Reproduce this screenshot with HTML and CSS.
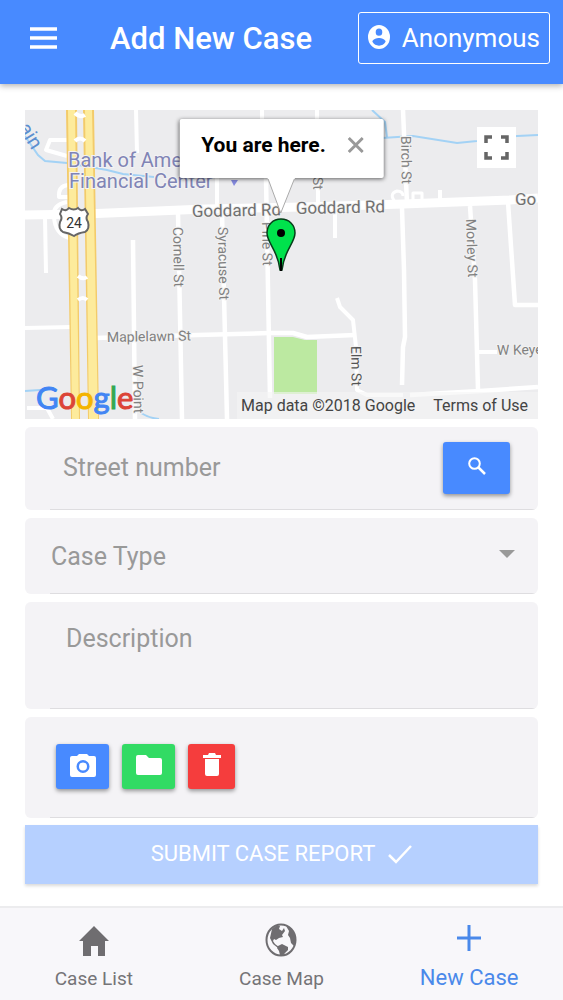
FILE: index.html
```html
<!DOCTYPE html>
<html lang="en">
<head>
  <meta charset="UTF-8">
  <meta name="viewport" content="width=device-width, initial-scale=1.0">
  <title>Add New Case</title>
  <link rel="stylesheet" href="styles.css">
</head>
<body>

  <header class="toolbar">
    <button class="menu-btn" type="button" aria-label="Menu">
      <svg width="28" height="22" viewBox="0 0 28 22"><path d="M0 2h27M0 11h27M0 20h27" stroke="#fff" stroke-width="3.500"/></svg>
    </button>
    <h1>Add New Case</h1>
    <button class="user-btn" type="button">
      <svg width="22" height="24" viewBox="2 2 20 20" preserveAspectRatio="none"><path fill="#fff" d="M12 2a10 10 0 1 0 0 20 10 10 0 0 0 0-20zm0 3a3 3 0 1 1 0 6 3 3 0 0 1 0-6zm0 14.200a7.200 7.200 0 0 1-6-3.200c0-2 4-3.100 6-3.100s6 1.100 6 3.100a7.200 7.200 0 0 1-6 3.200z"/></svg>
      <span>Anonymous</span>
    </button>
  </header>

  <main class="content">
    <section class="map" aria-label="Map">
      <svg class="map-tiles" viewBox="0 0 513 309" preserveAspectRatio="xMidYMid slice">
        <rect width="513" height="309" fill="#ececee"/>
        <path fill="#bce9a1" d="M249 227h19l12 3h12v54h-43z"/>

        <!-- water -->
        <g fill="none" stroke="#a3d2f5" stroke-width="2">
          <path d="M0 26l13 19 7 6 22 2 40 7 16 4 31 3"/>
          <path d="M347 0l13 12 2 15M357 28l31-2 44 7 20-2 40-5 21-1"/>
          <path d="M0 281l30-2M116 303q8 5 18 6"/>
        </g>

        <!-- streets -->
        <g fill="none" stroke="#fff" stroke-width="4" stroke-linejoin="round">
          <path d="M111 0l1 43M237 0v18M192 68v34M292 0v18M293 67v34M310 101v27"/>
          <path d="M0 218l47-1M20 107l1 56M2 298h20l6 11"/>
          <path d="M43 30H25l-4 10 21 6M43 75q-10 1-9 12h10M42 92q-15 3-13 15 1 17 15 21"/>
          <path d="M312 188l3 9 13 13 3 27 1 43 10 5h36"/>
          <path d="M453 242h19M415 80v14"/>
          <path d="M388 93V83h9v10M371 93q-8-9 1-12 6 0 6 5" stroke-width="3"/>
        </g>
        <g fill="none" stroke="#fff" stroke-width="4.500" stroke-linejoin="round">
          <path d="M108 130l2 179M153 103l4 206M197 102l5 207M241 68l4 220"/>
          <path d="M70 228l102-3 73-2h23l14 4 48-2"/>
          <path d="M378 0l4 94M377 98l2 62 1 67-2 10-1 38"/>
          <path d="M445 96l5 74 3 110M483 92l7 103h23M385 285l70-4 58-4"/>
        </g>
        <path d="M0 105l60-1 120-5 98-2 100-3 107-4 28-2" fill="none" stroke="#fff" stroke-width="9"/>

        <!-- highway -->
        <g>
          <path fill="#f3cb6a" d="M41 0h11l3 309h-9zM58 0h11l5 309H63z"/>
          <path fill="#fdeb9c" d="M43 0h7l4 309h-7zM60 0h7l6 309h-9z"/>
          <path d="M50 3q5 5 10 2M50 31q5-5 10 0M53 166q5 4 9 1M53 190q5-4 9 0" fill="none" stroke="#fff" stroke-width="4"/>
        </g>

        <!-- place and street names -->
        <g class="place">
          <text x="43" y="57">Bank of America</text>
          <text x="44" y="78">Financial Center</text>
          <path fill="#8489dd" d="M206 70h7l-4 6z"/>
        </g>
        <g class="road road-main">
          <text x="167" y="107" transform="rotate(-1 167 107)">Goddard Rd</text>
          <text x="271" y="104" transform="rotate(-1 271 104)">Goddard Rd</text>
          <text x="490" y="95">Go</text>
        </g>
        <g class="road">
          <text x="82" y="232" transform="rotate(-1 82 232)">Maplelawn St</text>
          <text x="472" y="245" transform="rotate(-1 472 245)">W Keyes</text>
          <text transform="translate(148 117) rotate(89)">Cornell St</text>
          <text transform="translate(193 117) rotate(89)">Syracuse St</text>
          <text transform="translate(237 112) rotate(89)">Pine St</text>
          <text transform="translate(288 67) rotate(89)">St</text>
          <text transform="translate(376 26) rotate(89)">Birch St</text>
          <text transform="translate(441 109) rotate(88)">Morley St</text>
          <text class="dark" transform="translate(326 236) rotate(89)">Elm St</text>
          <text transform="translate(108 255) rotate(89)">W Point</text>
        </g>
        <text class="river" transform="translate(-7 18) rotate(58)">ain</text>

        <!-- US 24 shield -->
        <g>
          <path fill="#fff" stroke="#666" stroke-width="2" d="M37 99q4 3 7-1 5 3 9 0 3 4 7 1l3 5q-3 4 0 8 2 7-3 10-7 1-11 4-5-3-11-4-5-3-3-10 3-4 0-8z"/>
          <text class="shield" x="49" y="118">24</text>
        </g>
      </svg>

      <svg class="pin" viewBox="0 0 30 54"><path d="M15 1C7 1 1 7 1 15c0 10 11 17 13 37h2c2-20 13-27 13-37C29 7 23 1 15 1z" fill="#00e24c" stroke="#063d19" stroke-width="1.500"/><path d="M15 40v13" stroke="#000" stroke-width="2"/><circle cx="15" cy="15" r="4" fill="#000"/></svg>

      <div class="info-window">
        <strong>You are here.</strong>
        <button type="button" aria-label="Close">
          <svg width="16" height="18" viewBox="0 0 16 18"><path d="M1 2l14 14M15 2L1 16" stroke="#999" stroke-width="3"/></svg>
        </button>
        <svg class="tail" width="30" height="38" viewBox="0 0 30 38"><path d="M1 1l13 35L28 1" fill="#fff" stroke="#aaa"/><path d="M1 0h27v2H1z" fill="#fff"/></svg>
      </div>

      <button class="fullscreen-btn" type="button" aria-label="Toggle fullscreen">
        <svg width="25" height="25" viewBox="0 0 25 25"><path d="M2 8V2h6M17 2h6v6M23 17v6h-6M8 23H2v-6" fill="none" stroke="#666" stroke-width="3.500"/></svg>
      </button>

      <div class="map-footer">
        <a class="google" href="#" aria-label="Google"><span class="b">G</span><span class="r">o</span><span class="y">o</span><span class="b">g</span><span class="g">l</span><span class="r">e</span></a>
        <span class="legal"><span>Map data ©2018 Google</span><a href="#">Terms of Use</a></span>
      </div>
    </section>

    <form class="case-form">
      <div class="item item-street">
        <input type="text" placeholder="Street number" aria-label="Street number">
        <button class="btn btn-search" type="button" aria-label="Search">
          <svg width="18" height="18" viewBox="0 0 18 18"><circle cx="6.500" cy="6.500" r="5.300" fill="none" stroke="#fff" stroke-width="2"/><path d="M10 10l7 7" stroke="#fff" stroke-width="2.500"/></svg>
        </button>
      </div>

      <div class="item item-type">
        <select aria-label="Case Type">
          <option>Case Type</option>
        </select>
        <svg width="16" height="8" viewBox="0 0 16 8"><path fill="#999" d="M0 0h16L8 8z"/></svg>
      </div>

      <div class="item item-desc">
        <textarea placeholder="Description" aria-label="Description"></textarea>
      </div>

      <div class="item item-photos">
        <button class="btn" type="button" aria-label="Take photo">
          <svg width="26" height="24" viewBox="0 0 26 24"><path fill="#fff" fill-rule="evenodd" d="M9 1h8l2 2h5q2 0 2 2v17q0 2-2 2H2q-2 0-2-2V5q0-2 2-2h5zM13 7a6.500 6.500 0 1 0 0 13 6.500 6.500 0 0 0 0-13zm0 2.500a4 4 0 1 1 0 8 4 4 0 0 1 0-8z"/></svg>
        </button>
        <button class="btn btn-green" type="button" aria-label="Choose file">
          <svg width="26" height="20" viewBox="0 0 26 20"><path fill="#fff" d="M2 0h8l3 3h11q2 0 2 2v13q0 2-2 2H2q-2 0-2-2V2q0-2 2-2z"/></svg>
        </button>
        <button class="btn btn-red" type="button" aria-label="Delete photo">
          <svg width="18" height="24" viewBox="0 0 18 24"><path fill="#fff" d="M6 0h6l1 2h5v3H0V2h5zM2 6h14v15q0 2-2 2H4q-2 0-2-2z"/></svg>
        </button>
      </div>

      <button class="submit-btn" type="submit" disabled>
        <span>SUBMIT CASE REPORT</span>
        <svg width="24" height="20" viewBox="0 0 24 20"><path d="M1 11l7 7L23 2" fill="none" stroke="#fff" stroke-width="2.500"/></svg>
      </button>
    </form>
  </main>

  <nav class="tabs">
    <a href="#">
      <svg width="30" height="32" viewBox="0 0 30 32"><path fill="#6f6d70" d="M15 1l15 15h-4v15h-7V21h-7v10H4V16H0z"/></svg>
      Case List
    </a>
    <a href="#">
      <svg width="32" height="34" viewBox="0 0 32 34"><ellipse cx="16" cy="17" rx="14.500" ry="15.500" fill="none" stroke="#6f6d70" stroke-width="2"/><path fill="#6f6d70" d="M7 6l5-4 3 1-1 3 3 2 2-3 1 3-3 4 1 2-4 1-3 2-2-1-1 2 2 3 4 3-1 1-5-4-3-6zM13 23l4-2 6 3v3l-3 3-2 3-3-1-1-4-2-3zM21 3l5 3 4 6 1 6-2 5-3-3-1-5-2-3 1-4z"/></svg>
      Case Map
    </a>
    <a class="active" href="#">
      <svg width="24" height="26" viewBox="0 0 24 26"><path d="M12 0v26M0 13h24" stroke="#4a89ea" stroke-width="3"/></svg>
      New Case
    </a>
  </nav>

</body>
</html>
```
FILE: styles.css
```css
* { margin: 0; padding: 0; box-sizing: border-box; }
body { font-family: Roboto, sans-serif; background: #fff; color: #000; min-height: 100vh; display: flex; flex-direction: column; }
button, input, select, textarea { font-family: inherit; border: none; background: none; outline: none; }
button { cursor: pointer; }
svg { display: block; flex-shrink: 0; }
a { color: inherit; text-decoration: none; }

.toolbar { display: flex; align-items: center; height: 84px; padding: 0 13px 8px 30px; background: #488aff; color: #fff; box-shadow: 0 2px 6px rgba(0,0,0,0.3); }
.toolbar h1 { flex: 1; margin-left: 52px; font-size: 31px; font-weight: 500; white-space: nowrap; }
.user-btn { display: flex; align-items: center; gap: 12px; height: 52px; padding: 0 9px; border: 1px solid #fff; border-radius: 3px; color: #fff; font-size: 26px; }
.user-btn svg { margin-bottom: 2px; }

.content { flex: 1; padding: 26px 25px 20px; }

.map { position: relative; aspect-ratio: 513 / 309; overflow: hidden; margin-bottom: 8px; }
.map-tiles { width: 100%; height: 100%; }
.map-tiles text { font-family: Roboto, sans-serif; }
.place text { font-size: 20px; fill: #8084b5; stroke: #f2f2f4; stroke-width: 2px; paint-order: stroke; }
.road text { font-size: 14px; fill: #808080; stroke: #f2f2f2; stroke-width: 2px; paint-order: stroke; }
.road-main text { font-size: 17px; fill: #707070; }
.road .dark { fill: #555; }
.map-tiles .river { font-size: 20px; fill: #5c8fd0; }
.map-tiles .shield { font-size: 14px; fill: #333; text-anchor: middle; }
.pin { position: absolute; left: 50%; top: 35%; width: 30px; margin-left: -16px; }
.info-window { position: absolute; left: 50%; top: 3%; transform: translateX(-50%); display: flex; align-items: center; gap: 22px; height: 59px; padding: 0 20px 8px 22px; background: #fff; border-radius: 2px; box-shadow: 0 1px 4px rgba(0,0,0,0.6); font-size: 21px; white-space: nowrap; }
.info-window strong { font-weight: 700; }
.tail { position: absolute; left: 50%; top: 100%; margin: -1px 0 0 -15px; }
.fullscreen-btn { position: absolute; right: 22px; top: 17px; display: flex; align-items: center; justify-content: center; width: 39px; height: 41px; background: #fff; }
.map-footer { position: absolute; left: 11px; right: 0; bottom: 0; display: flex; align-items: flex-end; justify-content: space-between; }
.google { font-family: Lato, sans-serif; font-size: 31px; line-height: 44px; -webkit-text-stroke: 1px; }
.google .b { color: #4285f4; }
.google .r { color: #dc4437; }
.google .y { color: #f4b400; }
.google .g { color: #34a853; }
.legal { display: flex; gap: 18px; padding: 0 10px 0 4px; background: rgba(245,245,245,0.6); font-size: 16px; line-height: 27px; color: #444; }

.case-form { display: flex; flex-direction: column; gap: 8px; }
.item { display: flex; align-items: center; background: linear-gradient(#dedde0, #dedde0) 25px 100% / 100% 1px no-repeat #f4f3f6; border-radius: 6px; padding: 0 28px 0 25px; }
.item input, .item select, .item textarea { flex: 1; min-width: 0; font-size: 25px; color: #999; }
.item ::placeholder { color: #999; opacity: 1; }
.btn { display: flex; align-items: center; justify-content: center; width: 53px; height: 45px; padding-bottom: 4px; background: #488aff; border-radius: 3px; box-shadow: 0 2px 4px rgba(0,0,0,0.4); }
.btn-search { width: 67px; height: 52px; }
.btn-green { background: #32db64; }
.btn-red { width: 47px; background: #f53d3d; }
.item-street { height: 83px; padding-left: 38px; padding-bottom: 2px; }
.item-type { height: 76px; position: relative; padding: 0; }
.item-type select { align-self: stretch; appearance: none; padding: 0 50px 0 26px; }
.item-type svg { position: absolute; right: 23px; top: 50%; margin-top: -6px; pointer-events: none; }
.item-desc { height: 107px; padding-left: 41px; }
.item-desc textarea { align-self: stretch; resize: none; padding-top: 22px; line-height: 30px; }
.item-photos { height: 101px; gap: 13px; padding-left: 31px; padding-bottom: 2px; }
.submit-btn { display: flex; align-items: center; justify-content: center; gap: 13px; height: 59px; margin-top: -1px; padding-bottom: 2px; background: #b6d0ff; color: #fff; font-size: 22px; box-shadow: 0 2px 3px rgba(0,0,0,0.15); cursor: default; }

.tabs { display: grid; grid-template-columns: repeat(3, 1fr); height: 94px; background: #f8f7fa; border-top: 2px solid #ececee; color: #757477; font-size: 19px; }
.tabs a { display: flex; flex-direction: column; align-items: center; justify-content: flex-end; gap: 10px; padding-bottom: 10px; }
.tabs .active { gap: 14px; color: #4a89ea; font-size: 22px; }
```
